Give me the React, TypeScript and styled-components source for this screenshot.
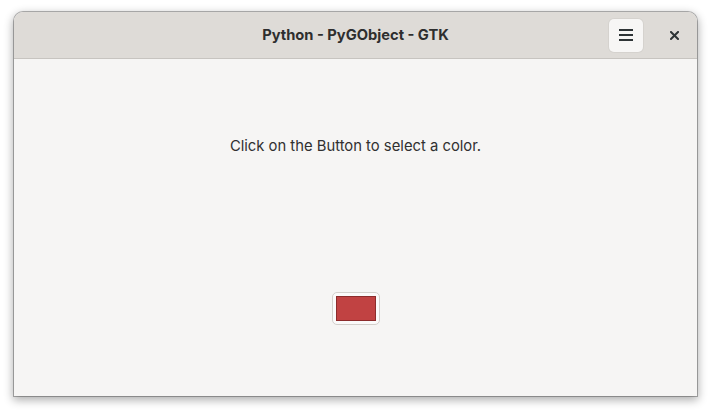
import React from "react";
import styled, { createGlobalStyle } from "styled-components";

const Global = createGlobalStyle`
  html, body { margin: 0; padding: 0; background: #ffffff; }
  body { font-family: Inter, "Noto Sans", sans-serif; }
`;

const Page = styled.div`
  width: 711px;
  height: 413px;
  padding: 12px 0 0 14px;
  box-sizing: border-box;
`;

const Window = styled.div`
  width: 683px;
  height: 384px;
  display: flex;
  flex-direction: column;
  border-radius: 9px 9px 0 0;
  overflow: hidden;
  background: #f6f5f4;
  box-shadow: 0 0 0 1px rgba(0, 0, 0, 0.28), 0 3px 10px 1px rgba(0, 0, 0, 0.33);
`;

const HeaderBar = styled.header`
  height: 47px;
  flex: none;
  box-sizing: border-box;
  background: #dedbd7;
  border-bottom: 1px solid #c7c4c0;
  display: grid;
  grid-template-columns: 1fr auto 1fr;
  align-items: center;
  padding: 0 11px;
`;

const Title = styled.div`
  grid-column: 2;
  font-size: 14.7px;
  font-weight: 700;
  color: #2e2e2e;
`;

const Controls = styled.div`
  grid-column: 3;
  justify-self: end;
  display: flex;
  align-items: center;
  gap: 19px;
`;

const MenuButton = styled.button`
  width: 34px;
  height: 33px;
  border: none;
  border-radius: 5px;
  background: #f7f6f5;
  box-shadow: 0 0 0 1px rgba(0, 0, 0, 0.04);
  display: flex;
  align-items: center;
  justify-content: center;
  padding: 0;
`;

const CloseButton = styled.button`
  width: 24px;
  height: 24px;
  border: none;
  background: transparent;
  display: flex;
  align-items: center;
  justify-content: center;
  padding: 0;
`;

const Content = styled.main`
  flex: 1;
  display: flex;
  flex-direction: column;
  align-items: center;
`;

const Label = styled.div`
  margin-top: 78px;
  font-size: 14.8px;
  color: #303030;
  line-height: 18px;
`;

const ColorButton = styled.button`
  margin-top: 137px;
  width: 48px;
  height: 33px;
  box-sizing: border-box;
  border: 1px solid #d3d0cc;
  border-radius: 5px;
  background: #fbfafa;
  display: flex;
  align-items: center;
  justify-content: center;
  padding: 0;
`;

const Swatch = styled.div<{ $color: string }>`
  width: 40px;
  height: 25px;
  box-sizing: border-box;
  background: ${(p) => p.$color};
  border: 1px solid #8c2c2c;
`;

export default function App() {
  return (
    <>
      <Global />
      <Page>
        <Window>
          <HeaderBar>
            <Title>Python - PyGObject - GTK</Title>
            <Controls>
              <MenuButton aria-label="Menu">
                <svg width="14" height="12" viewBox="0 0 14 12">
                  <rect x="0" y="0" width="14" height="2" fill="#2e3436" />
                  <rect x="0" y="5" width="14" height="2" fill="#2e3436" />
                  <rect x="0" y="10" width="14" height="2" fill="#2e3436" />
                </svg>
              </MenuButton>
              <CloseButton aria-label="Close">
                <svg width="9" height="9" viewBox="0 0 9 9">
                  <path d="M1 1 L8 8 M8 1 L1 8" stroke="#2e3436" strokeWidth="2" strokeLinecap="square" />
                </svg>
              </CloseButton>
            </Controls>
          </HeaderBar>
          <Content>
            <Label>Click on the Button to select a color.</Label>
            <ColorButton aria-label="Color">
              <Swatch $color="#c14242" />
            </ColorButton>
          </Content>
        </Window>
      </Page>
    </>
  );
}
